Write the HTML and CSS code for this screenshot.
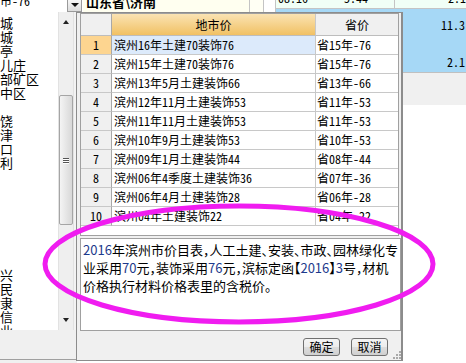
FILE: index.html
```html
<!DOCTYPE html>
<html lang="zh-CN">
<head>
<meta charset="utf-8">
<title>地市价</title>
<link rel="stylesheet" href="styles.css">
</head>
<body>
<div class="app">
  <div class="topbar">
    <div class="combo"><span class="tline hw">市-76</span></div>
    <div class="dropbtn"><i class="tri-down"></i></div>
    <div class="region"><span class="tline">山东省\济南</span></div>
    <div class="tc c1"></div>
    <div class="tc c2"></div>
    <div class="datatop">
      <div class="mintrow">
        <div class="mc m1"><span class="tline hw">08.16</span></div>
        <div class="mc m2"><span class="tline hw">5.44</span></div>
        <div class="mc m3"><span class="tline hw">2.1</span></div>
      </div>
      <div class="bluetop"></div>
    </div>
  </div>

  <div class="body">
    <div class="list">
      <div class="it">城</div>
      <div class="it">城</div>
      <div class="it">亭</div>
      <div class="it">儿庄</div>
      <div class="it">部矿区</div>
      <div class="it">中区</div>
      <div class="it"></div>
      <div class="it">饶</div>
      <div class="it">津</div>
      <div class="it">口</div>
      <div class="it">利</div>
      <div class="it"></div>
      <div class="it"></div>
      <div class="it"></div>
      <div class="it"></div>
      <div class="it"></div>
      <div class="it"></div>
      <div class="it"></div>
      <div class="it">兴</div>
      <div class="it">民</div>
      <div class="it">隶</div>
      <div class="it">信</div>
      <div class="it">业</div>
    </div>
    <div class="vscroll">
      <div class="sbtn"><i class="tri-up"></i></div>
      <div class="thumb"><i class="grip"></i><i class="grip"></i><i class="grip"></i></div>
      <div class="spacer"></div>
      <div class="sbtn"><i class="tri-dn"></i></div>
    </div>
    <div class="sep"></div>
    <div class="rightpane">
      <div class="blue">
        <div class="bv b1 hw">11.3</div>
        <div class="bv b2 hw">2.1</div>
      </div>
      <div class="grayrow"></div>
    </div>
  </div>

  <div class="footer">
    <div class="fleft"></div>
    <div class="fright"></div>
  </div>

  <div class="popup">
    <div class="grid">
      <div class="grow ghead"><div class="num"></div><div class="dm">地市价</div><div class="sj">省价</div></div>
      <div class="grow sel"><div class="num">1</div><div class="dm">滨州16年土建70装饰76</div><div class="sj">省15年-76</div></div>
      <div class="grow"><div class="num">2</div><div class="dm">滨州15年土建70装饰76</div><div class="sj">省15年-76</div></div>
      <div class="grow"><div class="num">3</div><div class="dm">滨州13年5月土建装饰66</div><div class="sj">省13年-66</div></div>
      <div class="grow"><div class="num">4</div><div class="dm">滨州12年11月土建装饰53</div><div class="sj">省11年-53</div></div>
      <div class="grow"><div class="num">5</div><div class="dm">滨州11年11月土建装饰53</div><div class="sj">省11年-53</div></div>
      <div class="grow"><div class="num">6</div><div class="dm">滨州10年9月土建装饰53</div><div class="sj">省10年-53</div></div>
      <div class="grow"><div class="num">7</div><div class="dm">滨州09年1月土建装饰44</div><div class="sj">省08年-44</div></div>
      <div class="grow"><div class="num">8</div><div class="dm">滨州06年4季度土建装饰36</div><div class="sj">省07年-36</div></div>
      <div class="grow"><div class="num">9</div><div class="dm">滨州06年4月土建装饰28</div><div class="sj">省06年-28</div></div>
      <div class="grow"><div class="num">10</div><div class="dm">滨州04年土建装饰22</div><div class="sj">省04年-22</div></div>
    </div>
    <div class="memo">
      <div class="ml"><span class="n">2016</span>年滨州市价目表，人工土建、安装、市政、园林绿化专</div>
      <div class="ml">业采用<span class="n">70</span>元，装饰采用<span class="n">76</span>元，滨标定函【<span class="n">2016</span>】<span class="n">3</span>号，材机</div>
      <div class="ml">价格执行材料价格表里的含税价。</div>
    </div>
    <div class="btnbar">
      <div class="btn">确定</div>
      <div class="btn">取消</div>
      <svg class="corner" width="9" height="9" viewBox="0 0 9 9">
        <rect x="7" y="1" width="2" height="2" fill="#a9a9a9"/>
        <rect x="4" y="4" width="2" height="2" fill="#a9a9a9"/>
        <rect x="7" y="4" width="2" height="2" fill="#a9a9a9"/>
        <rect x="1" y="7" width="2" height="2" fill="#a9a9a9"/>
        <rect x="4" y="7" width="2" height="2" fill="#a9a9a9"/>
        <rect x="7" y="7" width="2" height="2" fill="#a9a9a9"/>
      </svg>
    </div>
  </div>

  <svg class="annot" width="466" height="363" viewBox="0 0 466 363">
    <ellipse cx="239" cy="264" rx="194" ry="58" fill="none" stroke="#f01cf0" stroke-width="5"/>
  </svg>
</div>
</body>
</html>
```

FILE: styles.css
```css
* { box-sizing: border-box; margin: 0; padding: 0; }
html, body { width: 466px; height: 363px; overflow: hidden; background: #fff; }
body {
  font-family: "Noto Sans CJK SC", "Liberation Sans", sans-serif;
  font-size: 12px;
  color: #000;
}
.app {
  position: relative;
  width: 466px;
  height: 363px;
  overflow: hidden;
  display: flex;
  flex-direction: column;
  background: #fff;
}

/* ---------- top strip ---------- */
.topbar { display: flex; height: 12px; flex: none; }
.tline { display: block; line-height: 12px; margin-top: -5px; white-space: nowrap; }
.hw { font-feature-settings: "hwid" 1; }
.combo { width: 67px; background: #fff; overflow: hidden; }
.dropbtn {
  width: 15px;
  border: 1px solid #9a9a9a;
  border-top: none;
  background: linear-gradient(#f6f6f6, #dcdcdc);
  display: flex;
  justify-content: center;
  padding-top: 3px;
}
.tri-down {
  width: 0; height: 0;
  border-left: 4px solid transparent;
  border-right: 4px solid transparent;
  border-top: 4px solid #111;
}
.region {
  width: 166px;
  margin-left: 1px;
  background: #fffff0;
  overflow: hidden;
  padding-left: 3px;
}
.region .tline { font-size: 13px; font-weight: bold; line-height: 13px; margin-top: -5px; }
.tc { border-left: 1px solid #c4c4c4; }
.c1 { width: 14px; background: #fffff4; }
.c2 { width: 12px; background: #fff; }
.datatop {
  flex: 1;
  border-left: 1px solid #c4c4c4;
  display: flex;
  flex-direction: column;
}
.mintrow {
  height: 9px;
  border-bottom: 1px solid #c4c4c4;
  background: #f0fff6;
  display: flex;
  overflow: hidden;
  flex: none;
}
.mc .tline { margin-top: -8px; }
.m1 { width: 30px; padding-left: 2px; }
.m2 { width: 88px; text-align: right; padding-right: 26px; }
.m3 { flex: 1; border-left: 1px solid #c4c4c4; text-align: right; }
.bluetop { flex: 1; background: #a6d8f6; }

/* ---------- body ---------- */
.body { display: flex; height: 318px; flex: none; }
.list {
  width: 58px;
  background: #fff;
  padding-top: 4px;
  overflow: hidden;
  font-size: 13px;
}
.it { height: 14px; line-height: 14px; white-space: nowrap; }
.vscroll {
  width: 16px;
  background: #efefef;
  border-left: 1px solid #e2e2e2;
  border-right: 1px solid #e2e2e2;
  display: flex;
  flex-direction: column;
  align-items: center;
}
.sbtn {
  height: 20px;
  width: 100%;
  display: flex;
  align-items: center;
  justify-content: center;
  flex: none;
}
.tri-up {
  width: 0; height: 0;
  border-left: 3px solid transparent;
  border-right: 3px solid transparent;
  border-bottom: 4px solid #222;
}
.tri-dn {
  width: 0; height: 0;
  border-left: 3px solid transparent;
  border-right: 3px solid transparent;
  border-top: 4px solid #222;
}
.thumb {
  margin-top: 63px;
  width: 14px;
  height: 130px;
  flex: none;
  border: 1px solid #a5a5a5;
  border-radius: 2px;
  background: linear-gradient(to right, #f4f4f4, #d8d8d8);
  display: flex;
  flex-direction: column;
  justify-content: center;
  align-items: center;
  gap: 1px;
}
.grip { display: block; width: 6px; height: 1px; background: #555; box-shadow: 0 1px 0 #fff; }
.spacer { flex: 1; }
.sep { width: 3px; background: #f3f3f3; }
.rightpane { flex: 1; display: flex; flex-direction: column; }
.blue { height: 61px; background: #a6d8f6; border-bottom: 1px solid #c0c0c0; flex: none; }
.bv { text-align: right; padding-right: 1px; white-space: nowrap; }
.b1 { height: 26px; line-height: 26px; }
.b2 { margin-top: 15px; height: 18px; line-height: 18px; }
.grayrow { height: 32px; background: #f0f0f0; flex: none; }

/* ---------- footer ---------- */
.footer { flex: 1; display: flex; }
.fleft {
  width: 77px;
  background: linear-gradient(#f0f0f0 29px, #a0a0a0 29px, #a0a0a0 30px, #f0f0f0 30px);
}
.fright { flex: 1; background: #fff; }

/* ---------- popup ---------- */
.popup {
  position: absolute;
  left: 76px;
  top: 12px;
  width: 327px;
  height: 349px;
  border: 1px solid #8c8c8c;
  border-right: 2px solid #8c8c8c;
  background: #f0f0f0;
  display: flex;
  flex-direction: column;
}
.grid {
  margin-left: 3px;
  width: 319px;
  height: 223px;
  flex: none;
  border: 1px solid #a0a0a0;
  background: #fff;
}
.grow {
  display: grid;
  grid-template-columns: 31px 204px 82px;
  height: 19px;
}
.grow > div {
  border-bottom: 1px solid #c8c8c8;
  line-height: 18px;
  white-space: nowrap;
  overflow: hidden;
  font-feature-settings: "hwid" 1;
}
.num { background: #f0f0f0; border-right: 1px solid #a8a8a8; text-align: center; }
.dm { border-right: 1px solid #c8c8c8; padding-left: 2px; }
.sj { padding-left: 1px; }
.ghead { height: 22px; }
.ghead > div { line-height: 21px; text-align: center; padding-left: 0; border-bottom-color: #bdbdbd; }
.ghead .dm { background: linear-gradient(#fae3b3, #f1c164); }
.ghead .sj { background: #f0f0f0; }
.sel .num { background: #fdd590; }
.sel .dm { background: #dceafb; }

.memo {
  margin: 2px 0 0 3px;
  width: 321px;
  height: 93px;
  flex: none;
  border: 1px solid #a0a0a0;
  background: #fff;
  padding: 2px 2px 0;
  font-size: 13px;
  line-height: 18px;
  font-feature-settings: "halt" 1;
  overflow: hidden;
}
.ml { white-space: nowrap; }
.n { color: #1d3a8c; }

.btnbar {
  flex: 1;
  position: relative;
  display: flex;
  justify-content: flex-end;
  align-items: flex-start;
  gap: 11px;
  padding: 7px 13px 0 0;
}
.btn {
  width: 37px;
  height: 18px;
  border: 1px solid #707070;
  border-radius: 3px;
  background: linear-gradient(#f4f4f4, #ececec 50%, #dddddd 51%, #d0d0d0);
  font-size: 12px;
  line-height: 16px;
  text-align: center;
}
.corner { position: absolute; right: 0; bottom: 1px; }

/* ---------- annotation ---------- */
.annot { position: absolute; left: 0; top: 0; pointer-events: none; }
```
